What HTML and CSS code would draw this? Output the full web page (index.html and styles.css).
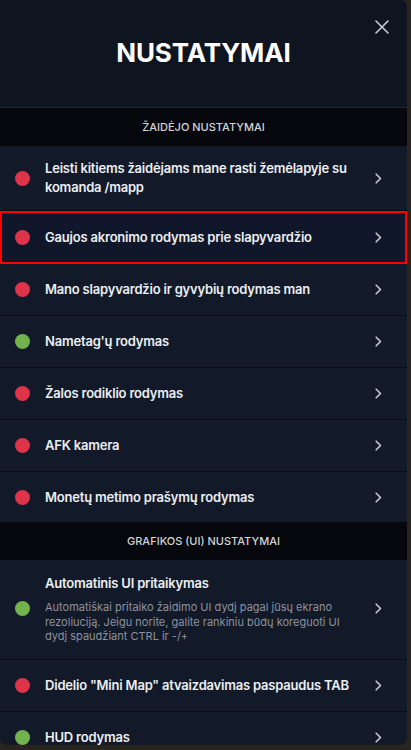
FILE: index.html
```html
<!DOCTYPE html>
<html lang="lt">
<head>
<meta charset="utf-8">
<title>Nustatymai</title>
<link rel="stylesheet" href="styles.css">
</head>
<body>
<div class="panel">
  <header class="head">
    <h1 class="title">NUSTATYMAI</h1>
    <button class="close" aria-label="Uždaryti">
      <svg width="14" height="14" viewBox="0 0 14 14"><path d="M1 1L13 13M13 1L1 13" stroke="#c9cdd5" stroke-width="1.6" fill="none" stroke-linecap="round"/></svg>
    </button>
  </header>

  <div class="section">ŽAIDĖJO NUSTATYMAI</div>
  <div class="row tall"><span class="dot red"></span><span class="label">Leisti kitiems žaidėjams mane rasti žemėlapyje su komanda /mapp</span><span class="chev"><svg width="7" height="11" viewBox="0 0 7 11"><path d="M1.2 1.2L5.5 5.5L1.2 9.8" stroke="#c6cad2" stroke-width="1.6" fill="none" stroke-linecap="round" stroke-linejoin="round"/></svg></span></div>
  <div class="row marked"><span class="dot red"></span><span class="label">Gaujos akronimo rodymas prie slapyvardžio</span><span class="chev"><svg width="7" height="11" viewBox="0 0 7 11"><path d="M1.2 1.2L5.5 5.5L1.2 9.8" stroke="#c6cad2" stroke-width="1.6" fill="none" stroke-linecap="round" stroke-linejoin="round"/></svg></span></div>
  <div class="row"><span class="dot red"></span><span class="label">Mano slapyvardžio ir gyvybių rodymas man</span><span class="chev"><svg width="7" height="11" viewBox="0 0 7 11"><path d="M1.2 1.2L5.5 5.5L1.2 9.8" stroke="#c6cad2" stroke-width="1.6" fill="none" stroke-linecap="round" stroke-linejoin="round"/></svg></span></div>
  <div class="row"><span class="dot green"></span><span class="label">Nametag'ų rodymas</span><span class="chev"><svg width="7" height="11" viewBox="0 0 7 11"><path d="M1.2 1.2L5.5 5.5L1.2 9.8" stroke="#c6cad2" stroke-width="1.6" fill="none" stroke-linecap="round" stroke-linejoin="round"/></svg></span></div>
  <div class="row"><span class="dot red"></span><span class="label">Žalos rodiklio rodymas</span><span class="chev"><svg width="7" height="11" viewBox="0 0 7 11"><path d="M1.2 1.2L5.5 5.5L1.2 9.8" stroke="#c6cad2" stroke-width="1.6" fill="none" stroke-linecap="round" stroke-linejoin="round"/></svg></span></div>
  <div class="row"><span class="dot red"></span><span class="label">AFK kamera</span><span class="chev"><svg width="7" height="11" viewBox="0 0 7 11"><path d="M1.2 1.2L5.5 5.5L1.2 9.8" stroke="#c6cad2" stroke-width="1.6" fill="none" stroke-linecap="round" stroke-linejoin="round"/></svg></span></div>
  <div class="row last"><span class="dot red"></span><span class="label">Monetų metimo prašymų rodymas</span><span class="chev"><svg width="7" height="11" viewBox="0 0 7 11"><path d="M1.2 1.2L5.5 5.5L1.2 9.8" stroke="#c6cad2" stroke-width="1.6" fill="none" stroke-linecap="round" stroke-linejoin="round"/></svg></span></div>

  <div class="section">GRAFIKOS (UI) NUSTATYMAI</div>
  <div class="row desc-row"><span class="dot green"></span><span class="label"><span class="name">Automatinis UI pritaikymas</span><span class="desc">Automatiškai pritaiko žaidimo UI dydį pagal jūsų ekrano rezoliuciją. Jeigu norite, galite rankiniu būdų koreguoti UI dydį spaudžiant CTRL ir -/+</span></span><span class="chev"><svg width="7" height="11" viewBox="0 0 7 11"><path d="M1.2 1.2L5.5 5.5L1.2 9.8" stroke="#c6cad2" stroke-width="1.6" fill="none" stroke-linecap="round" stroke-linejoin="round"/></svg></span></div>
  <div class="row"><span class="dot red"></span><span class="label">Didelio "Mini Map" atvaizdavimas paspaudus TAB</span><span class="chev"><svg width="7" height="11" viewBox="0 0 7 11"><path d="M1.2 1.2L5.5 5.5L1.2 9.8" stroke="#c6cad2" stroke-width="1.6" fill="none" stroke-linecap="round" stroke-linejoin="round"/></svg></span></div>
  <div class="row"><span class="dot green"></span><span class="label">HUD rodymas</span><span class="chev"><svg width="7" height="11" viewBox="0 0 7 11"><path d="M1.2 1.2L5.5 5.5L1.2 9.8" stroke="#c6cad2" stroke-width="1.6" fill="none" stroke-linecap="round" stroke-linejoin="round"/></svg></span></div>
</div>
</body>
</html>
```
FILE: styles.css
```css
* { box-sizing: border-box; }
html, body {
  margin: 0;
  padding: 0;
  height: 750px;
  overflow: hidden;
  background: #28251f;
  font-family: Inter, "Noto Sans", "Liberation Sans", sans-serif;
}
.panel {
  width: 407px;
  height: 745px;
  background: #121a2a;
  border-radius: 0 7px 7px 7px;
  overflow: hidden;
}
.head {
  height: 108px;
  background: #0f1421;
  border-bottom: 1px solid #1f2737;
  display: flex;
  align-items: center;
  justify-content: center;
  position: relative;
}
.title {
  margin: 0 0 2px 0;
  color: #ffffff;
  font-size: 26px;
  font-weight: 700;
  letter-spacing: -0.1px;
}
.close {
  position: absolute;
  top: 19px;
  right: 17px;
  width: 16px;
  height: 16px;
  padding: 1px;
  border: 0;
  background: none;
  display: flex;
}
.section {
  height: 38px;
  background: #05070d;
  color: #d2d4d8;
  font-size: 11px;
  font-weight: 500;
  display: flex;
  align-items: center;
  justify-content: center;
}
.row {
  display: flex;
  align-items: center;
  min-height: 52px;
  padding: 13px 0 13px 15px;
  border-bottom: 1px solid #090d15;
  color: #eceef1;
  font-size: 13px;
  font-weight: 600;
  line-height: 19px;
  letter-spacing: -0.2px;
}
.row.last { border-bottom: 0; min-height: 50px; }
.row.tall { min-height: 65px; }
.row.marked {
  outline: 2px solid #ff0000;
  outline-offset: -2px;
  background: #10172a;
  min-height: 53px;
}
.dot {
  width: 15px;
  height: 15px;
  border-radius: 50%;
  flex: none;
  margin-right: 15px;
}
.dot.red { background: #df3349; }
.dot.green { background: #72b34e; }
.label {
  flex: 1;
  padding-right: 12px;
}
.chev {
  flex: none;
  width: 7px;
  height: 11px;
  margin-right: 25px;
  display: flex;
}
.desc-row { padding-top: 14px; padding-bottom: 15px; }
.name { display: block; }
.desc {
  display: block;
  margin-top: 7px;
  color: #8d929c;
  font-size: 11px;
  font-weight: 400;
  line-height: 14.5px;
  letter-spacing: 0;
}
```
